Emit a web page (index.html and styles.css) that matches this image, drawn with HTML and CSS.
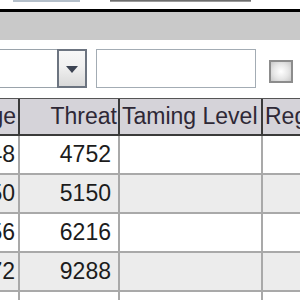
FILE: index.html
```html
<!DOCTYPE html>
<html>
<head>
<meta charset="utf-8">
<link rel="stylesheet" href="styles.css">
</head>
<body>
<div class="tabs">
  <div class="tab tab-a"></div>
  <div class="tab tab-b"></div>
</div>
<div class="rule"></div>
<div class="toolbar"></div>
<div class="filters">
  <div class="combo">
    <div class="combo-field"></div>
    <div class="combo-btn"><span class="arrow"></span></div>
  </div>
  <div class="search"></div>
  <div class="check"></div>
</div>
<div class="grid">
  <div class="hd c0">Damage</div>
  <div class="hd c1">Threat</div>
  <div class="hd c2">Taming Level</div>
  <div class="hd c3">Regeneration</div>

  <div class="cell c0">3248</div>
  <div class="cell c1">4752</div>
  <div class="cell c2"></div>
  <div class="cell c3"></div>

  <div class="cell c0 alt">3450</div>
  <div class="cell c1 alt">5150</div>
  <div class="cell c2 alt"></div>
  <div class="cell c3 alt"></div>

  <div class="cell c0">4156</div>
  <div class="cell c1">6216</div>
  <div class="cell c2"></div>
  <div class="cell c3"></div>

  <div class="cell c0 alt">6172</div>
  <div class="cell c1 alt">9288</div>
  <div class="cell c2 alt"></div>
  <div class="cell c3 alt"></div>

  <div class="cell c0">7240</div>
  <div class="cell c1">10860</div>
  <div class="cell c2"></div>
  <div class="cell c3"></div>
</div>
</body>
</html>
```
FILE: styles.css
```css
html, body {
  margin: 0;
  padding: 0;
  background: #ffffff;
  overflow: hidden;
  width: 300px;
  height: 300px;
  font-family: "Liberation Sans", Arial, sans-serif;
}

.tabs {
  display: flex;
  height: 9px;
}
.tab {
  height: 2px;
}
.tab-a {
  margin-left: 13px;
  width: 67px;
  background: #b4bfca;
}
.tab-b {
  margin-left: 30px;
  width: 141px;
  height: 1px;
  background: #6e6e6e;
  border-bottom: 1px solid #9a9a9a;
}

.rule {
  height: 3px;
  background: #000000;
}

.toolbar {
  height: 28px;
  background: #c9c9c9;
}

.filters {
  display: flex;
  align-items: flex-start;
  height: 58px;
  padding-top: 9px;
  box-sizing: border-box;
}

.combo {
  display: flex;
  height: 39px;
  margin-left: -40px;
}
.combo-field {
  width: 97px;
  height: 39px;
  box-sizing: border-box;
  border: 1px solid #9aa3ab;
  border-right: none;
  background: #ffffff;
}
.combo-btn {
  width: 30px;
  height: 39px;
  box-sizing: border-box;
  border: 2px solid #6c7480;
  background: linear-gradient(#f7f7f7 0%, #f0f0f0 45%, #d9d9d9 100%);
  display: flex;
  align-items: center;
  justify-content: center;
}
.arrow {
  width: 0;
  height: 0;
  border-left: 6px solid transparent;
  border-right: 6px solid transparent;
  border-top: 7px solid #3c4352;
  margin-top: 1px;
}

.search {
  margin-left: 9px;
  width: 160px;
  height: 39px;
  box-sizing: border-box;
  border: 1px solid #a3acb4;
  background: #ffffff;
}

.check {
  margin-left: 13px;
  margin-top: 11px;
  width: 24px;
  height: 23px;
  box-sizing: border-box;
  border: 2px solid #8c8c8c;
  background: radial-gradient(circle at 50% 50%, #ffffff 0%, #e6e6e6 55%, #c8c8c8 100%);
}

.grid {
  display: grid;
  grid-template-columns: 101px 100px 143px 140px;
  grid-auto-rows: 39px;
  grid-template-rows: 37px;
  margin-left: -81px;
  border-top: 1px solid #555555;
  width: max-content;
}

.hd {
  box-sizing: border-box;
  background: #d5d3d9;
  border-right: 2px solid #3a3a3a;
  border-bottom: 2px solid #3a3a3a;
  font-size: 23px;
  color: #2e2836;
  line-height: 34px;
  white-space: nowrap;
  overflow: hidden;
}
.cell {
  box-sizing: border-box;
  background: #ffffff;
  border-right: 2px solid #a9a9a9;
  border-bottom: 2px solid #a9a9a9;
  font-size: 23px;
  color: #1c1c1c;
  line-height: 37px;
  white-space: nowrap;
  overflow: hidden;
}
.cell.alt {
  background: #ececec;
}

.hd.c0 { text-align: right; padding-right: 2px; }
.hd.c1 { text-align: right; padding-right: 1px; }
.hd.c2 { text-align: left; padding-left: 2px; }
.hd.c3 { text-align: left; padding-left: 2px; }

.cell.c0 { text-align: right; padding-right: 3px; }
.cell.c1 { text-align: right; padding-right: 7px; }
```
